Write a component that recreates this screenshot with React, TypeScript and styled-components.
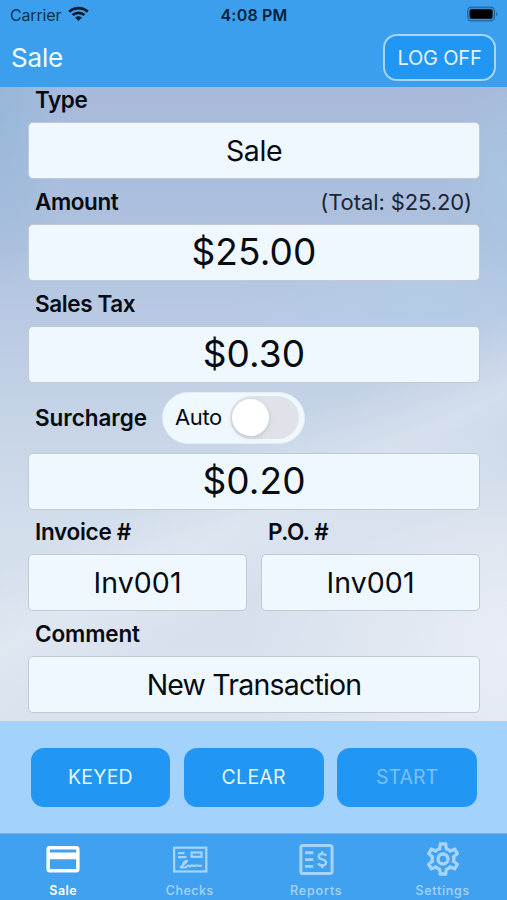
import React from "react";
import styled, { createGlobalStyle } from "styled-components";

const GlobalStyle = createGlobalStyle`
  *, *::before, *::after { box-sizing: border-box; }
  body { margin: 0; }
`;

const Screen = styled.div`
  display: flex;
  flex-direction: column;
  width: 507px;
  height: 900px;
  overflow: hidden;
  font-family: Inter, "Liberation Sans", sans-serif;
  color: #060b12;
`;

const Header = styled.header`
  flex: none;
  height: 87px;
  background: #3c9fee;
`;

const StatusBar = styled.div`
  display: grid;
  grid-template-columns: 1fr auto 1fr;
  align-items: center;
  height: 30px;
  padding: 0 9px 0 10px;
`;

const Carrier = styled.div`
  display: flex;
  align-items: center;
  gap: 7px;
  font-size: 16px;
  letter-spacing: -0.15px;
  color: #0d3353;

  svg { margin-top: -2px; }
`;

const Clock = styled.div`
  font-size: 16px;
  font-weight: 600;
  letter-spacing: 0.18px;
  color: #06203a;
`;

const BatterySlot = styled.div`
  display: flex;
  justify-content: flex-end;
  padding-bottom: 2px;
`;

const NavBar = styled.div`
  display: flex;
  align-items: center;
  justify-content: space-between;
  height: 55px;
  padding: 0 11px 0 11px;
`;

const Title = styled.h1`
  margin: 0;
  font-size: 26px;
  font-weight: 400;
  letter-spacing: -0.19px;
  color: #f3fbff;
`;

const LogOff = styled.button`
  width: 113px;
  height: 47px;
  padding: 0;
  border: 2px solid #a5d6fc;
  border-radius: 14px;
  background: #2196f3;
  color: #e2f3ff;
  font: 400 20px Inter, sans-serif;
  letter-spacing: -0.2px;
`;

const Form = styled.main`
  flex: none;
  height: 634px;
  padding: 0 27px 0 28px;
  background:
    linear-gradient(153deg, transparent 54%, rgba(236, 240, 247, 0.4) 63%, transparent 72%),
    radial-gradient(ellipse 190px 65px at 420px 215px, rgba(178, 207, 232, 0.6), transparent),
    radial-gradient(ellipse 60px 120px at 507px 100px, rgba(166, 200, 228, 0.7), transparent),
    radial-gradient(ellipse 70px 180px at 0 20px, rgba(148, 184, 217, 0.8), transparent),
    radial-gradient(ellipse 260px 220px at 507px 560px, rgba(238, 240, 247, 0.8), transparent),
    linear-gradient(180deg, #a8b9da 0%, #adc0de 22%, #b9c9e3 36%, #c7d5e7 54%, #d4dfec 72%, #d9e3ee 100%);
`;

const LabelRow = styled.div<{ $height: number; $after?: number }>`
  display: flex;
  align-items: center;
  height: ${(p) => p.$height}px;
  margin-bottom: ${(p) => p.$after ?? 0}px;
  padding: 0 8px 0 7px;
`;

const Label = styled.label<{ $spacing: number }>`
  font-size: 22.5px;
  font-weight: 600;
  line-height: 28px;
  letter-spacing: ${(p) => p.$spacing}px;
  white-space: nowrap;
`;

const Total = styled.span`
  margin-left: auto;
  font-size: 22px;
  line-height: 28px;
  letter-spacing: -0.1px;
  color: #1a2433;
`;

const Field = styled.div<{ $large?: boolean; $spacing: number }>`
  display: flex;
  align-items: center;
  justify-content: center;
  height: 57px;
  padding-bottom: ${(p) => (p.$large ? 2 : 0)}px;
  border: 1px solid #bfcad6;
  border-radius: 5px;
  background: #eff8ff;
  font-size: ${(p) => (p.$large ? 37 : 28.5)}px;
  letter-spacing: ${(p) => p.$spacing}px;
  white-space: nowrap;
`;

const Columns = styled.div`
  display: grid;
  grid-template-columns: 1fr 1fr;
  column-gap: 14px;
`;

const TogglePill = styled.div`
  display: flex;
  align-items: center;
  justify-content: space-between;
  width: 143px;
  height: 52px;
  margin-left: 15px;
  padding: 0 5px 2px 12px;
  border: 1px solid #e4edf5;
  border-radius: 26px;
  background: #eff8fe;
  font-size: 22px;
  letter-spacing: -0.4px;
`;

const Track = styled.span`
  display: flex;
  align-items: center;
  width: 69px;
  height: 43px;
  padding: 0 2px;
  border-radius: 22px;
  background: #dfe2e9;
`;

const Knob = styled.span`
  width: 37px;
  height: 37px;
  border-radius: 50%;
  background: #fff;
  box-shadow: 0 2px 5px rgba(30, 40, 60, 0.15);
`;

const ActionBar = styled.div`
  display: grid;
  grid-template-columns: repeat(3, 1fr);
  column-gap: 13.5px;
  flex: none;
  height: 112px;
  padding: 26.5px 30px 0 30.5px;
  background: #a3d2fc;
`;

const Action = styled.button<{ $spacing: number; $dim?: boolean }>`
  height: 59.5px;
  padding: 0;
  border: 0;
  border-radius: 13px;
  background: #2196f3;
  color: ${(p) => (p.$dim ? "#7cc0f9" : "#e3f5ff")};
  font: 400 19.5px Inter, sans-serif;
  letter-spacing: ${(p) => p.$spacing}px;
`;

const TabBar = styled.nav`
  display: grid;
  grid-template-columns: repeat(4, 1fr);
  flex: none;
  height: 67px;
  padding-right: 1px;
  border-top: 1px solid #6fb2e9;
  background: #40a1f0;
`;

const Tab = styled.a<{ $active?: boolean; $spacing: number }>`
  display: flex;
  flex-direction: column;
  align-items: center;
  padding-top: 5px;
  color: ${(p) => (p.$active ? "#ffffff" : "#a6d4fa")};
  font-size: 12.5px;
  font-weight: ${(p) => (p.$active ? 600 : 500)};
  line-height: 16px;
  letter-spacing: ${(p) => p.$spacing}px;

  svg { display: block; margin-bottom: 4px; }
`;

const WifiIcon = () => (
  <svg width="21" height="16" viewBox="0 0 21 16" fill="none" stroke="#041b30" strokeWidth="2.7">
    <path d="M1.2 5.7C6.4 .8 14.6 .8 19.8 5.7" />
    <path d="M4.6 9.1C8 6.1 13 6.1 16.4 9.1" />
    <path d="M7.1 11.6Q10.5 8.8 13.9 11.6L10.5 15Z" fill="#041b30" stroke="none" />
  </svg>
);

const BatteryIcon = () => (
  <svg width="31" height="16" viewBox="0 0 33 16">
    <rect x="0.75" y="0.75" width="28.5" height="14.5" rx="4" fill="#3a8dd0" stroke="#24689f" strokeWidth="1.3" />
    <rect x="2.8" y="3" width="24.4" height="10" rx="2" fill="#000" />
    <path d="M31 5.5Q32.6 6.5 32.6 8T31 10.5Z" fill="#24689f" />
  </svg>
);

const CardIcon = () => (
  <svg width="40" height="40" viewBox="0 0 40 40">
    <path
      fill="currentColor"
      fillRule="evenodd"
      d="M6.8 7H33.2Q36.6 7 36.6 10.4V30Q36.6 33.4 33.2 33.4H6.8Q3.4 33.4 3.4 30V10.4Q3.4 7 6.8 7ZM6.9 10.5V13.6H33.1V10.5ZM6.9 20.3V29.9H33.1V20.3Z"
    />
  </svg>
);

const CheckIcon = () => (
  <svg width="40" height="40" viewBox="0 0 40 40" fill="none" stroke="currentColor" strokeWidth="2.2">
    <rect x="4.1" y="8.7" width="32.2" height="23.8" />
    <path d="M8 14.1h6.5M8 18.2h8.5" />
    <rect x="21.6" y="13.5" width="10" height="4.3" />
    <path
      strokeWidth="2"
      strokeLinejoin="round"
      d="M9.8 28.6Q14 26.5 17.3 21.8Q13.6 22.2 13 25.1T11 28.5H15.8Q18.6 25.8 19 26.8T20.2 27.6Q22 25.6 22.6 26.4T24.5 27.2Q27 25.6 27.6 26.8H32"
    />
  </svg>
);

const ReportIcon = () => (
  <svg width="40" height="40" viewBox="0 0 40 40" fill="none" stroke="currentColor" strokeWidth="3">
    <rect x="4.9" y="6.5" width="31.2" height="28" rx="2" />
    <path strokeWidth="2.9" d="M9 13.8h8.3M9 20.6h8.3M9 27.4h8.3" />
    <path
      strokeWidth="2.3"
      d="M30.2 16.8Q29.2 14.8 26.4 14.8Q22.7 15 22.7 17.4Q22.7 19.5 26.3 20.4Q30.1 21.3 30.1 23.8Q30 26.5 26.4 26.5Q23.1 26.5 22.2 24.3M26.3 12.3V15M26.3 26.3V29.3"
    />
  </svg>
);

const GearIcon = () => (
  <svg width="40" height="40" viewBox="0 0 24 24">
    <path
      fill="currentColor"
      d="M12,8A4,4 0 0,1 16,12A4,4 0 0,1 12,16A4,4 0 0,1 8,12A4,4 0 0,1 12,8M12,10A2,2 0 0,0 10,12A2,2 0 0,0 12,14A2,2 0 0,0 14,12A2,2 0 0,0 12,10M10,22C9.75,22 9.54,21.82 9.5,21.58L9.13,18.93C8.5,18.68 7.96,18.34 7.44,17.94L4.95,18.95C4.73,19.03 4.46,18.95 4.34,18.73L2.34,15.27C2.21,15.05 2.27,14.78 2.46,14.63L4.57,12.97L4.5,12L4.57,11L2.46,9.37C2.27,9.22 2.21,8.95 2.34,8.73L4.34,5.27C4.46,5.05 4.73,4.96 4.95,5.05L7.44,6.05C7.96,5.66 8.5,5.32 9.13,5.07L9.5,2.42C9.54,2.18 9.75,2 10,2H14C14.25,2 14.46,2.18 14.5,2.42L14.87,5.07C15.5,5.32 16.04,5.66 16.56,6.05L19.05,5.05C19.27,4.96 19.54,5.05 19.66,5.27L21.66,8.73C21.79,8.95 21.73,9.22 21.54,9.37L19.43,11L19.5,12L19.43,13L21.54,14.63C21.73,14.78 21.79,15.05 21.66,15.27L19.66,18.73C19.54,18.95 19.27,19.04 19.05,18.95L16.56,17.95C16.04,18.34 15.5,18.68 14.87,18.93L14.5,21.58C14.46,21.82 14.25,22 14,22H10M11.25,4L10.88,6.61C9.68,6.86 8.62,7.5 7.85,8.39L5.44,7.35L4.69,8.65L6.8,10.2C6.4,11.37 6.4,12.64 6.8,13.8L4.68,15.36L5.43,16.66L7.86,15.62C8.63,16.5 9.68,17.14 10.87,17.38L11.24,20H12.76L13.13,17.39C14.32,17.14 15.37,16.5 16.14,15.62L18.57,16.66L19.32,15.36L17.2,13.81C17.6,12.64 17.6,11.37 17.2,10.2L19.31,8.65L18.56,7.35L16.15,8.39C15.38,7.5 14.32,6.86 13.12,6.62L12.75,4H11.25Z"
    />
  </svg>
);

export default function App() {
  return (
    <Screen>
      <GlobalStyle />
      <Header>
        <StatusBar>
          <Carrier>
            Carrier <WifiIcon />
          </Carrier>
          <Clock>4:08 PM</Clock>
          <BatterySlot>
            <BatteryIcon />
          </BatterySlot>
        </StatusBar>
        <NavBar>
          <Title>Sale</Title>
          <LogOff>LOG OFF</LogOff>
        </NavBar>
      </Header>

      <Form>
        <LabelRow $height={26} $after={9}>
          <Label $spacing={-0.45}>Type</Label>
        </LabelRow>
        <Field $spacing={-0.4}>Sale</Field>
        <LabelRow $height={45}>
          <Label $spacing={-0.43}>Amount</Label>
          <Total>(Total: $25.20)</Total>
        </LabelRow>
        <Field $large $spacing={0.15}>$25.00</Field>
        <LabelRow $height={45}>
          <Label $spacing={-0.4}>Sales Tax</Label>
        </LabelRow>
        <Field $large $spacing={0.1}>$0.30</Field>
        <LabelRow $height={70}>
          <Label $spacing={-0.05}>Surcharge</Label>
          <TogglePill>
            Auto
            <Track>
              <Knob />
            </Track>
          </TogglePill>
        </LabelRow>
        <Field $large $spacing={0.1}>$0.20</Field>
        <Columns>
          <div>
            <LabelRow $height={44}>
              <Label $spacing={-0.28}>Invoice #</Label>
            </LabelRow>
            <Field $spacing={0.1}>Inv001</Field>
          </div>
          <div>
            <LabelRow $height={44}>
              <Label $spacing={-0.5}>P.O. #</Label>
            </LabelRow>
            <Field $spacing={0.1}>Inv001</Field>
          </div>
        </Columns>
        <LabelRow $height={45}>
          <Label $spacing={-0.13}>Comment</Label>
        </LabelRow>
        <Field $spacing={-0.8}>New Transaction</Field>
      </Form>

      <ActionBar>
        <Action $spacing={0.18}>KEYED</Action>
        <Action $spacing={0.26}>CLEAR</Action>
        <Action $spacing={0.01} $dim>START</Action>
      </ActionBar>

      <TabBar>
        <Tab $active $spacing={0.5}>
          <CardIcon />
          Sale
        </Tab>
        <Tab $spacing={0.49}>
          <CheckIcon />
          Checks
        </Tab>
        <Tab $spacing={0.85}>
          <ReportIcon />
          Reports
        </Tab>
        <Tab $spacing={0.72}>
          <GearIcon />
          Settings
        </Tab>
      </TabBar>
    </Screen>
  );
}
